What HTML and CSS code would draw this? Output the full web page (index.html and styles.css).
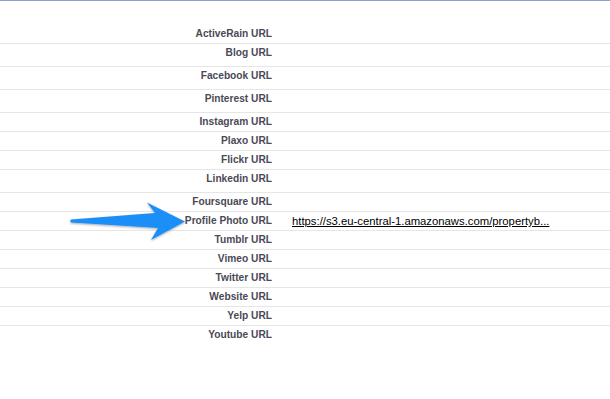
FILE: index.html
```html
<!DOCTYPE html>
<html lang="en">
<head>
  <meta charset="UTF-8">
  <meta name="viewport" content="width=device-width, initial-scale=1.0">
  <title>Social URLs</title>
  <link rel="stylesheet" href="styles.css">
</head>
<body>
  <div class="block">
    <div class="list">
      <div class="row"><div class="label">ActiveRain URL</div><div class="data"></div></div>
      <div class="row tall"><div class="label">Blog URL</div><div class="data"></div></div>
      <div class="row tall"><div class="label">Facebook URL</div><div class="data"></div></div>
      <div class="row tall"><div class="label">Pinterest URL</div><div class="data"></div></div>
      <div class="row"><div class="label">Instagram URL</div><div class="data"></div></div>
      <div class="row"><div class="label">Plaxo URL</div><div class="data"></div></div>
      <div class="row"><div class="label">Flickr URL</div><div class="data"></div></div>
      <div class="row tall"><div class="label">Linkedin URL</div><div class="data"></div></div>
      <div class="row"><div class="label">Foursquare URL</div><div class="data"></div></div>
      <div class="row"><div class="label">Profile Photo URL</div><div class="data"><a href="#">https://s3.eu-central-1.amazonaws.com/propertyb...</a></div></div>
      <div class="row"><div class="label">Tumblr URL</div><div class="data"></div></div>
      <div class="row"><div class="label">Vimeo URL</div><div class="data"></div></div>
      <div class="row"><div class="label">Twitter URL</div><div class="data"></div></div>
      <div class="row"><div class="label">Website URL</div><div class="data"></div></div>
      <div class="row"><div class="label">Yelp URL</div><div class="data"></div></div>
      <div class="row last"><div class="label">Youtube URL</div><div class="data"></div></div>
    </div>

    <!-- pointer arrow -->
    <svg class="arrow" width="130" height="50" viewBox="0 0 130 50">
      <defs>
        <filter id="shade" x="-10%" y="-20%" width="120%" height="140%">
          <feDropShadow dx="0" dy="1" stdDeviation="0.8" flood-color="#000" flood-opacity="0.35"/>
        </filter>
      </defs>
      <path filter="url(#shade)" fill="#1f8ef8"
            d="M8,22.6 Q6.5,24 8,25.4 L95,31 L88,43 L122,24.5 L84,5.5 L92,16 Z"/>
    </svg>
  </div>
</body>
</html>
```

FILE: styles.css
```css
body {
  margin: 0;
  font-family: "Liberation Sans", Arial, sans-serif;
  background: #fff;
}
.block {
  position: relative;
  border-top: 1px solid #8ea1c9;
  padding-top: 24px;
  height: 374px;
}
.row {
  display: grid;
  grid-template-columns: 282px 1fr;
  border-bottom: 1px solid #e6e6e6;
  height: 18px;
}
.row.tall {
  height: 22px;
}
.row.last {
  border-bottom: none;
}
.label {
  text-align: right;
  padding: 3px 10px 0 0;
  font-size: 10.2px;
  line-height: 12px;
  font-weight: bold;
  color: #4a4a56;
  white-space: nowrap;
}
.data {
  padding: 3px 0 0 10px;
  font-size: 11.3px;
  line-height: 12px;
  white-space: nowrap;
}
.data a {
  color: #000;
  text-decoration: underline;
}
.arrow {
  position: absolute;
  left: 63px;
  top: 196px;
}
```
